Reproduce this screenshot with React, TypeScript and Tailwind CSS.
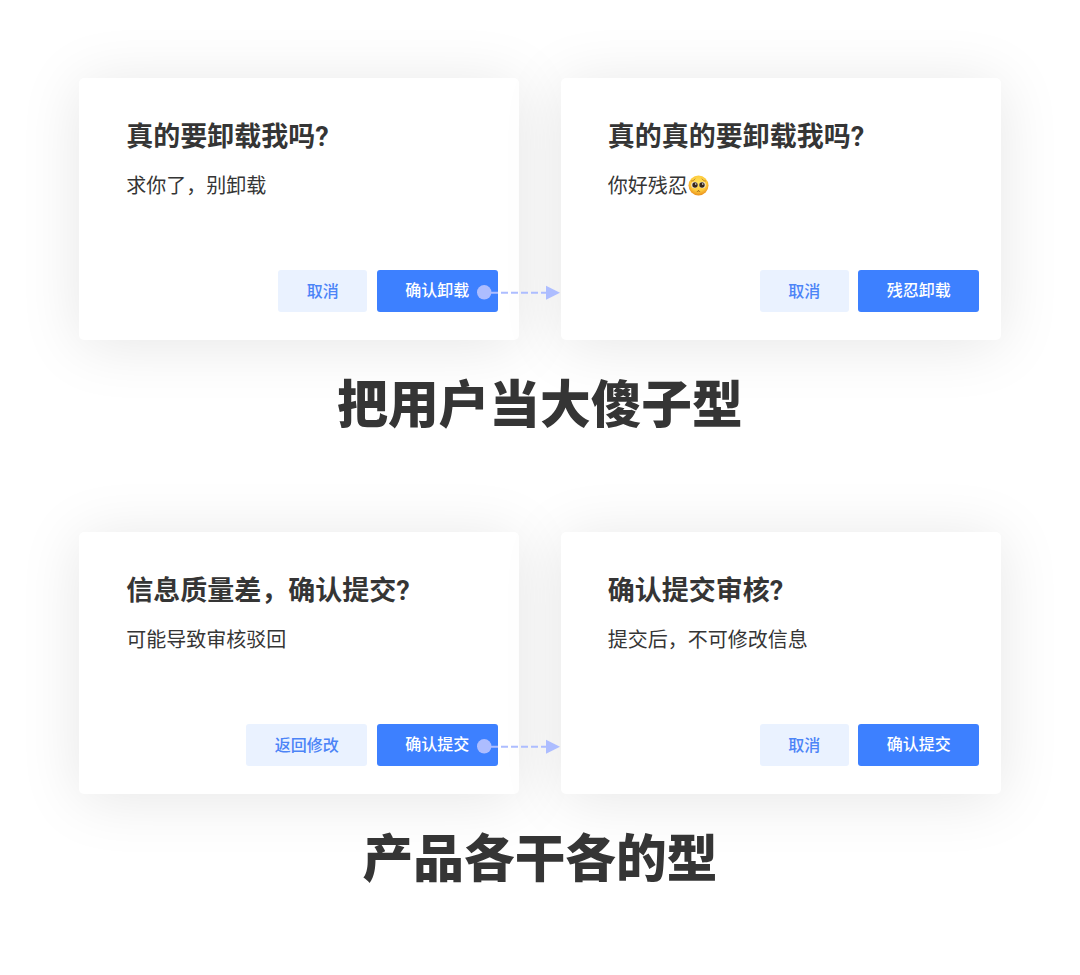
type DialogProps = {
  title: string;
  message: string;
  sad?: boolean;
  cancel: string;
  confirm: string;
  linked?: boolean;
};

function PleadingFace() {
  return (
    <svg viewBox="0 0 42 42" className="-mt-px h-[21px] w-[21px]">
      <defs>
        <radialGradient id="face" cx="50%" cy="38%" r="62%">
          <stop offset="0%" stopColor="#ffe65c" />
          <stop offset="65%" stopColor="#fdc93b" />
          <stop offset="100%" stopColor="#e98e1c" />
        </radialGradient>
      </defs>
      <circle cx="21" cy="21" r="20" fill="url(#face)" />
      <path d="M7 12c3 0 5-1.500 7-4M35 12c-3 0-5-1.500-7-4" fill="none" stroke="#b0721e" strokeWidth="1.6" strokeLinecap="round" />
      <circle cx="13" cy="20" r="6.3" fill="#f4efe6" />
      <circle cx="29" cy="20" r="6.3" fill="#f4efe6" />
      <circle cx="14" cy="20" r="5.4" fill="#35261a" />
      <circle cx="28" cy="20" r="5.4" fill="#35261a" />
      <circle cx="15.5" cy="18" r="1.5" fill="#fff" />
      <circle cx="29.5" cy="18" r="1.5" fill="#fff" />
      <path d="M19 32.500c1-1.500 3-1.500 4 0" fill="none" stroke="#7a410c" strokeWidth="2" strokeLinecap="round" />
    </svg>
  );
}

function Connector() {
  return (
    <svg viewBox="0 0 84 16" className="absolute bottom-[39px] left-[398px] z-10 h-4 w-[84px]" fill="#adbdff">
      <circle cx="7.200" cy="7.300" r="7.200" />
      <path d="M14 7.700H69" stroke="#adbdff" strokeWidth="2" strokeDasharray="7 3" />
      <path d="M69 .7L83 7.700L69 14.700Z" />
    </svg>
  );
}

function Dialog({ title, message, sad, cancel, confirm, linked }: DialogProps) {
  return (
    <section className="relative flex h-[262px] w-[440px] flex-col rounded-[5px] bg-white pt-[39px] pr-[21.5px] pb-[28px] pl-[47px] shadow-[0_5px_62px_rgba(0,0,0,0.1)]">
      <h2 className="text-[27px] leading-[40px] font-bold whitespace-nowrap">{title}</h2>
      <p className="mt-[14px] flex items-center text-[20px] leading-[30px]">
        {message}
        {sad && <PleadingFace />}
      </p>
      <div className="mt-auto flex justify-end gap-[9.500px] text-[16px] leading-[42px] font-medium">
        <button type="button" className="h-[42px] rounded-[3px] bg-[#eaf2ff] px-[28.5px] pt-px text-[#4c84f7]">
          {cancel}
        </button>
        <button type="button" className="h-[42px] rounded-[3px] bg-[#3d80ff] px-[28.5px] pb-px text-white">
          {confirm}
        </button>
      </div>
      {linked && <Connector />}
    </section>
  );
}

const caption = "relative mt-[36px] text-center text-[50.700px] leading-[60px] font-black";

export default function App() {
  return (
    <main className="h-[975px] w-[1080px] overflow-hidden bg-white pt-[78px] font-['Roboto','Noto_Sans_CJK_SC',sans-serif] text-[#353535]">
      <div className="flex justify-center gap-[41.500px]">
        <Dialog title="真的要卸载我吗?" message="求你了，别卸载" cancel="取消" confirm="确认卸载" linked />
        <Dialog title="真的真的要卸载我吗?" message="你好残忍" sad cancel="取消" confirm="残忍卸载" />
      </div>
      <h1 className={caption}>把用户当大傻子型</h1>

      <div className="mt-[95.500px] flex justify-center gap-[41.500px]">
        <Dialog title="信息质量差，确认提交?" message="可能导致审核驳回" cancel="返回修改" confirm="确认提交" linked />
        <Dialog title="确认提交审核?" message="提交后，不可修改信息" cancel="取消" confirm="确认提交" />
      </div>
      <h1 className={caption}>产品各干各的型</h1>
    </main>
  );
}
